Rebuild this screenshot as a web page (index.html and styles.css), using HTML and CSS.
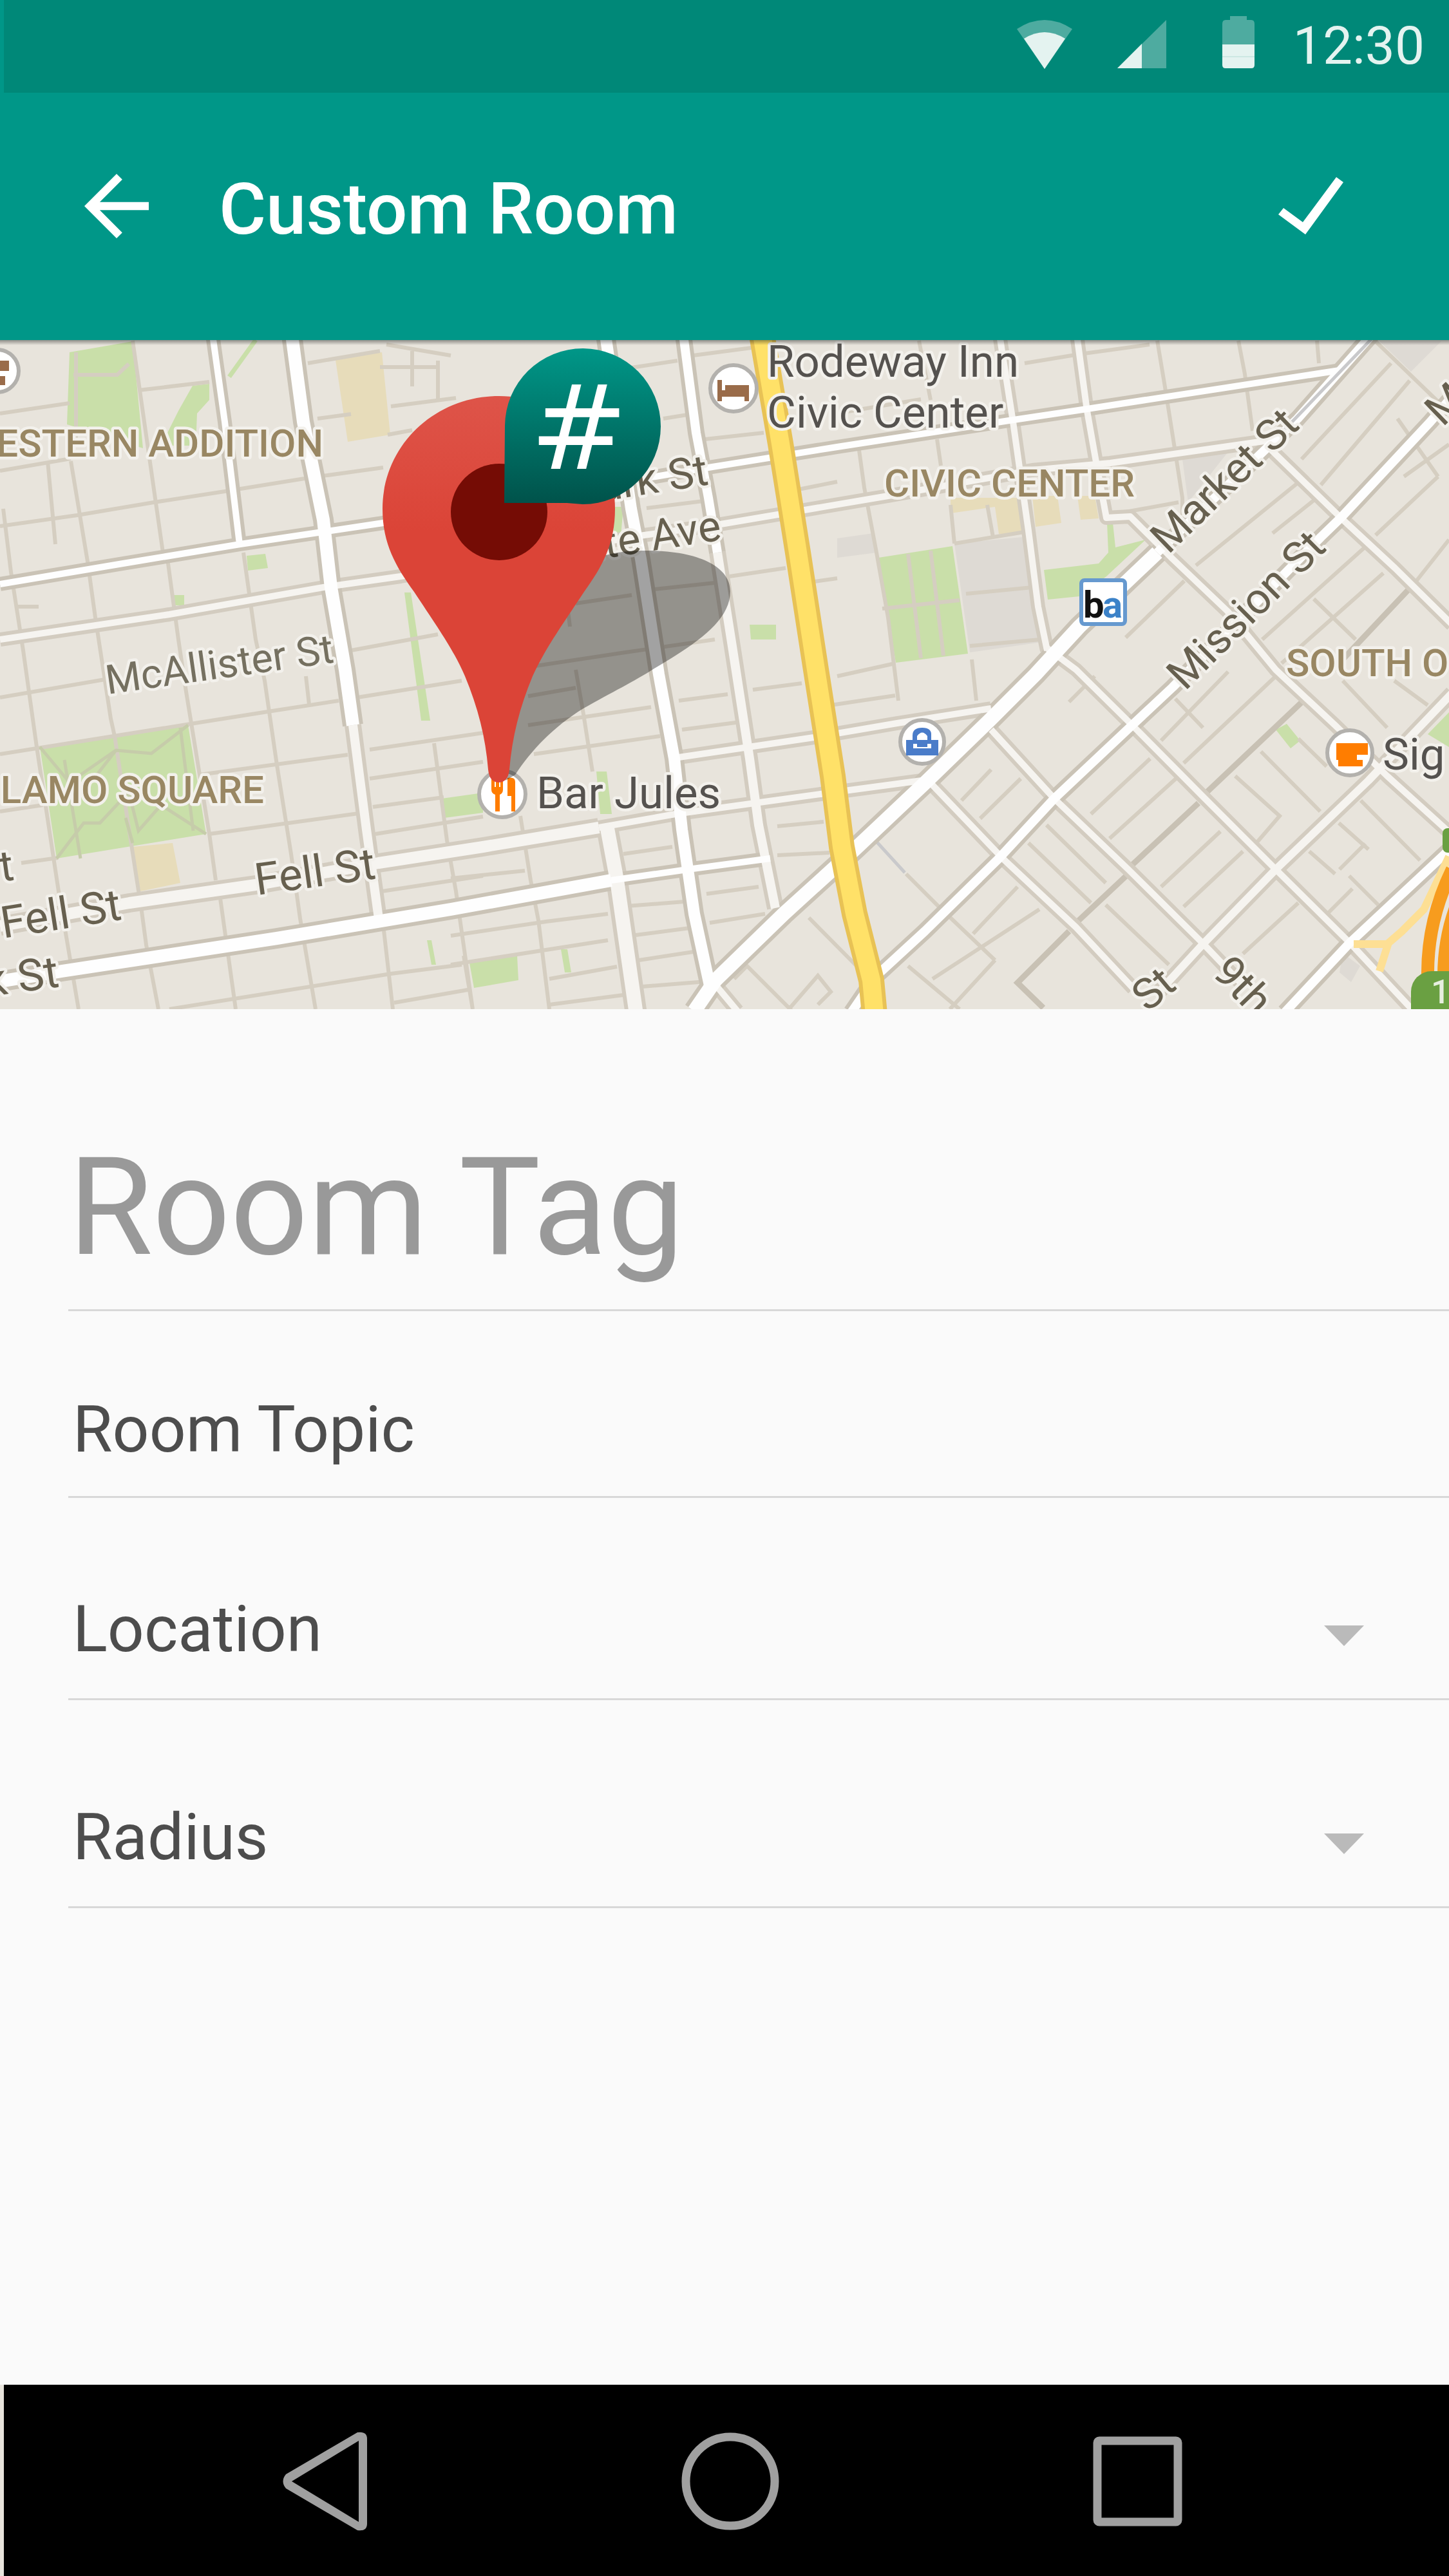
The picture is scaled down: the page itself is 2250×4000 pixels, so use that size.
FILE: index.html
```html
<!DOCTYPE html>
<html lang="en">
<head>
<meta charset="utf-8">
<meta name="viewport" content="width=device-width, initial-scale=1">
<title>Custom Room</title>
<link rel="stylesheet" href="styles.css">
</head>
<body>
<div class="screen">
  <div class="status-bar">
    <svg class="status-icon wifi" viewBox="0 0 86 82" aria-hidden="true">
      <path class="dim" d="M0 20Q43 -8 86 20L43 82Z"/>
      <path class="lit" d="M11 35Q43 15 75 35L43 82Z"/>
    </svg>
    <svg class="status-icon signal" viewBox="0 0 76 82" aria-hidden="true">
      <path class="dim" d="M0 81L76 6V81Z"/>
      <path class="lit" d="M0 81L38 43V81Z"/>
    </svg>
    <svg class="status-icon battery" viewBox="0 0 50 82" aria-hidden="true">
      <path class="dim" d="M12 0H38V6H45Q50 6 50 12V44H0V12Q0 6 5 6H12Z"/>
      <path class="lit" d="M0 44H50V76Q50 81 45 81H5Q0 81 0 76Z"/>
      <path class="tick" d="M0 63H50"/>
    </svg>
    <time class="clock">12:30</time>
  </div>

  <header class="app-bar">
    <button class="icon-button" type="button" aria-label="Back">
      <svg class="back-icon" viewBox="0 0 24 24"><path d="M20 11H7.83l5.59-5.59L12 4l-8 8 8 8 1.41-1.41L7.83 13H20z"/></svg>
    </button>
    <h1 class="title">Custom Room</h1>
    <button class="icon-button" type="submit" form="room-form" aria-label="Save">
      <svg class="check-icon" viewBox="0 0 101 90"><path d="M90 0L101 8L42 89L0 58L8 48L38 70Z"/></svg>
    </button>
  </header>

  <svg class="map" viewBox="0 528 2250 1039" preserveAspectRatio="xMidYMid slice" role="img" aria-label="Map">
    <defs>
      <linearGradient id="badge-fill" x1="0" y1="0" x2="0" y2="1"><stop offset="0" stop-color="#009788"/><stop offset="1" stop-color="#00524a"/></linearGradient>
      <linearGradient id="pin-fill" x1="0" y1="0" x2="0" y2="1"><stop offset="0" stop-color="#de5449"/><stop offset=".35" stop-color="#db4437"/></linearGradient>
      <linearGradient id="bar-shadow" x1="0" y1="0" x2="0" y2="1"><stop offset="0" stop-color="#000" stop-opacity=".38"/><stop offset="1" stop-color="#000" stop-opacity="0"/></linearGradient>
      <g id="roads">
        <path class="w10 minor" d="M1552 520L1573 655L1597 824L1612 942L1626 1010"/>
        <path class="w10 minor" d="M1672 520L1688 638L1703 723L1718 804L1755 802L1821 868L1906 949L1981 1040L2073 1126L2154 1205L2250 1292"/>
        <path class="w10 minor" d="M0 993L263 954L502 912L622 895L1000 831L1119 814L1379 770L1603 730L1724 719L1970 684"/>
        <path class="w18 minor" d="M0 1438L201 1402L397 1374L588 1340L750 1315L930 1285"/>
        <path class="w10 minor" d="M930 1285L1049 1264L1274 1233L1446 1210"/>
        <path class="w10 minor" d="M1054 1176L1264 1145L1393 1123L1539 1100"/>
        <path class="w22 minor" d="M942 1281L958 1367L988 1575"/>
        <path class="w12 minor" d="M1800 1540L1867 1467L1981 1350L2125 1212L2255 1076"/>
        <path class="w10 minor" d="M1448 1219L1557 1333L1671 1440L1760 1535M1539 1133L1637 1240L1752 1350L1867 1464L1930 1530M1624 1005L1671 1040L1758 1126L1867 1236L1981 1350L2096 1464L2195 1570M1965 690L2082 804L2166 882L2255 970M1105 1522L1145 1570"/>
        <path class="w14 minor" d="M1114 858L1138 1010L1164 1178L1178 1281L1204 1410"/>
        <path class="w14 minor" d="M548 1126L569 1288L588 1426"/>
        <path class="w14" d="M1061 520L1081 672L1100 773L1114 858"/>
        <path class="w10" d="M330 520L349 655L372 845"/>
        <path class="w10" d="M0 907L191 875L373 845L595 812L1100 726L1300 694L1567 653L1688 635L2080 575"/>
        <path class="w20" d="M453 520L471 655L502 807L514 912L536 1040L548 1126"/>
        <path class="w20" d="M0 1524L96 1508L430 1457L700 1412L949 1367"/>
        <path class="w10" d="M949 1367L1068 1350L1196 1333"/>
        <path class="w18" d="M940 520L980 790L995 868L1023 1047L1047 1178L1059 1288L1078 1419L1102 1530"/>
        <path class="w22" d="M1078 1570L1111 1522L1217 1419L1327 1319L1436 1216L1539 1116L1608 1047L1676 973L1797 858"/>
        <path class="w14" d="M1797 858L2015 650L2130 520"/>
        <path class="w14" d="M1322 1572L1361 1515L1436 1446L1551 1333L1637 1240L1758 1126L1821 1067L2051 834L2082 804L2221 655L2260 610"/>
        <path class="w14" d="M1995 1572L2096 1464L2250 1320"/>
      </g>
    </defs>

    <rect class="land" y="520" width="2250" height="1050"/>

    <g class="park">
      <path d="M108 547L206 530L222 696L104 659Z"/>
      <path d="M299 599L325 596V621L306 642L304 692H250L277 638Z"/>
      <path d="M383 863L412 860L416 882L385 886ZM270 924H286V940H270Z"/>
      <path d="M62 1160L292 1126L320 1295L88 1333Z"/>
      <path d="M686 1240L750 1231V1262L690 1270ZM729 1495L803 1484L805 1522L736 1534Z"/>
      <path d="M926 1198H942L950 1264H932ZM871 1474H881L887 1510H877ZM955 787H968L964 832H952ZM1164 970H1205V993H1166ZM663 1460H670L677 1498H670Z"/>
      <path d="M1364 866L1479 848L1503 1015L1391 1029Z"/>
      <path d="M1621 885L1706 875L1721 858L1719 812H1728L1732 850L1779 838L1718 895L1676 926L1627 931Z"/>
      <path d="M1981 1133L1998 1124L2019 1150L2004 1162ZM2217 1140L2250 1106V1160Z"/>
      <path d="M628 920H638L668 1119H654Z"/>
    </g>
    <path class="park-line" d="M397 528L356 585"/>
    <g class="school">
      <path d="M521 559L593 547L606 675L540 686Z"/>
      <path d="M206 1315L268 1309L280 1371L218 1384Z"/>
      <path d="M1476 773H1579L1588 829H1551L1545 787L1476 797ZM1603 770H1642L1648 812L1608 818ZM1673 770H1700L1706 805L1678 807Z"/>
    </g>
    <g class="civic">
      <path d="M1482 844L1588 834L1618 997L1506 1013Z"/>
      <path d="M1836 713L1906 703L1845 780ZM2142 530H2238L2191 577ZM1300 836L1356 828L1362 858L1300 866ZM2085 1480L2112 1500L2098 1525L2080 1510Z"/>
    </g>

    <path class="lane" d="M206 529L253 858L261 875L277 993L289 1074L325 1295L335 1367M342 1395L366 1567M110 716L136 872L148 959L172 1116L178 1143L220 1415L227 1467L246 1567M5 790L17 888L36 1010L57 1160L91 1384L122 1567M378 858L397 993L411 1057L430 1188L452 1326L466 1426L490 1567M595 1436L610 1567M674 1154L694 1305L708 1384L734 1567M894 1040L906 1109L920 1198M808 1267L824 1367L836 1429L853 1567M74 716L86 845M118 547L118 690M720 1484L734 1567M475 1050L480 1094"/>
    <path class="lane" d="M0 642L108 626M215 606L325 593M0 731L110 712M0 817L120 800L239 780L349 763L473 743L595 726M478 564L590 545M493 650L545 643M607 631L708 618M602 675L640 668M0 1083L163 1055M0 1171L296 1124L416 1105L526 1088M555 1083L717 1057M310 1203L540 1172M574 1164L750 1138M325 1295L564 1262M574 1209L750 1183M579 1253L689 1238M583 1295L750 1268M0 1260L67 1250M33 1340L90 1332M593 1384L750 1360M263 1567L607 1512L717 1498M612 1557L732 1536M545 1010L680 985M114 582H182L200 565M24 942H60"/>
    <path class="lane" d="M700 1364L815 1352M700 1453L848 1431L944 1419M700 1498L944 1460M853 1520L958 1501M853 1560L968 1545M968 1326L1044 1315M973 1407L1063 1400M987 1452L1071 1441M992 1491L1083 1477M997 1532L1097 1524M1054 1088L1130 1078M1059 1133L1150 1121M1169 1071L1245 1061M1207 1283L1279 1276M1207 1328L1288 1324M1097 1388L1178 1377M1102 1433L1188 1419M820 1081L894 1068M820 1126L1011 1098M829 1171L1025 1143M894 937L981 924M1016 915L1110 905M832 1034L971 1013L1110 993M882 949L885 973M980 571L1052 560M1030 650L1080 642M1076 552L1167 540M1095 682L1186 672M1133 895L1220 882M1004 789L1100 777M1240 760L1300 748M1250 905L1300 898M1300 1050L1390 1030M1290 1095L1390 1080M600 535L700 552M640 545V600M680 560V620M590 570H680"/>
    <path class="lane" d="M1797 529L1809 601L1824 696L1836 773V800M1923 529L1933 581L1945 669M2045 529L2048 564M1333 692L1342 757L1361 858L1379 959L1395 1088M1509 1024L1516 1088M1455 682L1461 723M1476 784L1482 844M1533 784L1542 834M1427 529L1445 621M1591 564L1676 550L1785 535M1482 844L1603 824M1506 1003L1615 993M1500 922L1603 912M1720 800L1830 780M1410 860L1430 1022M1445 855L1465 1018M1370 945L1490 932M1310 640L1430 620"/>
    <path class="lane" d="M2160 564L2021 713M2189 591L2051 753M2136 530L2250 640M2015 750L1857 878M2045 773L1976 828M1839 902L1748 990M2233 740L2136 831M2250 838L2197 905M2118 851L1960 993M2148 890L1990 1030M2250 690L2180 740M2170 650L2233 740M2040 930L2105 993M1907 1043L1803 1150M1981 1050L1838 1185M1786 1178L1694 1264M1826 1209L1723 1302M1895 1291L1803 1377M1930 1322L1838 1408M1580 1377L1511 1450M1614 1412L1448 1520M2016 1402L1930 1481M1539 1195L1493 1243M1585 1209L1522 1271M1660 1090L1700 1050M2100 1380L2060 1420M2120 1310L2080 1350M1475 1567L1545 1491"/>
    <path class="lane" d="M1597 1309L1694 1402M1717 1405L1815 1498M1625 1281L1717 1371M1918 1205L1987 1267L1950 1310M1958 1167L2050 1260M2016 1147L2060 1190M2033 1322L2073 1357M2079 1278L2125 1319M2113 1243L2205 1336M2085 1057L2154 1130M2165 1057L2217 1095M1407 1357L1460 1410L1545 1491M1256 1425L1350 1520M1140 1520L1160 1500L1230 1570M1225 1567L1270 1515L1290 1540L1270 1560M1410 1500L1490 1567M1825 1085L1868 1130M2095 1360L2140 1405"/>
    <path class="lane dark" d="M2027 1085L1875 1229M1861 1247L1758 1343M1752 1357L1671 1433M1660 1446L1580 1526L1620 1565M2197 905L2070 1040"/>
    <path class="park-path" d="M62 1160L108 1215L180 1165L235 1170L292 1126M100 1180L125 1333M88 1333L130 1278H155L200 1230L215 1290L250 1250L320 1295M280 1130L300 1290M180 1165L145 1210M206 1309L195 1270"/>
    <path class="rail" d="M1362 1308L1405 1355M1115 1535L1190 1460"/>

    <use href="#roads" class="road-edge"/>
    <use href="#roads" class="road-fill"/>
    <path class="rail" d="M2130 526L1990 672"/>

    <path class="avenue-edge" d="M1183 520L1212 689L1239 858L1267 1040L1293 1205L1307 1315L1327 1419L1353 1522L1358 1575"/>
    <path class="avenue-fill" d="M1183 520L1212 689L1239 858L1267 1040L1293 1205L1307 1315L1327 1419L1353 1522L1358 1575"/>

    <path class="ramp" d="M2250 1330L2211 1412L2177 1446L2154 1466H2102M2156 1464L2142 1508"/>
    <path class="freeway" d="M2255 1350Q2216 1430 2217 1515M2260 1410Q2242 1460 2242 1515"/>
    <rect class="shield" x="2191" y="1508" width="90" height="90" rx="32"/>
    <rect class="shield" x="2240" y="1286" width="30" height="38" rx="8"/>

    <g class="poi">
      <circle cx="-4" cy="576" r="33"/>
      <circle cx="1139" cy="603" r="36"/>
      <circle cx="780" cy="1233" r="36"/>
      <circle cx="1432" cy="1152" r="34"/>
      <circle cx="2096" cy="1169" r="35"/>
    </g>
    <path class="hotel" d="M1114 590H1121V606H1126V598H1163V623H1156V616H1121V623H1114ZM0 560H14V576H0ZM0 584H8V598H0Z"/>
    <path class="food" d="M763 1208H768V1222H770V1208H775V1222H777V1208H781V1226Q781 1232 776 1234V1260H769V1234Q763 1232 763 1226ZM788 1208Q800 1206 800 1214V1260H794V1236H788ZM2075 1154H2124V1172H2107V1180H2116V1190H2078V1180H2075Z"/>
    <path class="shop" d="M1407 1173V1149H1417V1142Q1417 1130 1432 1130T1446 1142V1149H1457V1173ZM1424 1149H1440V1143Q1432 1132 1424 1143ZM1418 1155V1162H1446V1155H1440V1160H1424V1155Z"/>
    <rect class="transit" x="1679" y="901" width="68" height="68" rx="5"/>

    <g class="label area">
      <text x="502" y="709" text-anchor="end">ESTERN ADDITION</text>
      <text x="410" y="1247" text-anchor="end">LAMO SQUARE</text>
      <text x="1373" y="771">CIVIC CENTER</text>
      <text x="1997" y="1050">SOUTH O</text>
    </g>
    <g class="label street">
      <text class="small" transform="translate(167 1078) rotate(-8)">McAllister St</text>
      <text class="large" transform="translate(399 1390) rotate(-8)">Fell St</text>
      <text class="large" transform="translate(5 1457) rotate(-9)">Fell St</text>
      <text class="large" transform="translate(-21 1548) rotate(-8)">k St</text>
      <text transform="translate(2 1369) rotate(-8)">t</text>
      <text transform="translate(1102 752) rotate(-9)" text-anchor="end">Turk St</text>
      <text transform="translate(1122 838) rotate(-9)" text-anchor="end">Golden Gate Ave</text>
      <text transform="translate(1814 862) rotate(-44)">Market St</text>
      <text transform="translate(1840 1074) rotate(-45)">Mission St</text>
      <text transform="translate(2240 664) rotate(-44)">M</text>
      <text transform="translate(1782 1573) rotate(-40)">St</text>
      <text transform="translate(1880 1512) rotate(46)">9th</text>
    </g>
    <g class="label place">
      <text x="1191" y="585">Rodeway Inn</text>
      <text x="1191" y="664">Civic Center</text>
      <text x="833" y="1255">Bar Jules</text>
      <text x="2147" y="1195">Sig</text>
    </g>
    <text class="bart-b" x="1682" y="959">b</text>
    <text class="bart-a" x="1712" y="959">a</text>
    <text class="route" x="2222" y="1558">1</text>

    <path class="pin-shadow" d="M785 1212L800 1203C825 1165 860 1128 906 1100C950 1075 985 1058 1016 1038C1080 1000 1134 965 1134 918C1134 880 1085 855 1004 855C970 855 955 858 930 865L790 1000Z"/>
    <path class="pin" fill="url(#pin-fill)" d="M775 615C675 615 594 692 594 790C594 845 615 880 643 919C680 975 705 1010 722 1050C742 1098 754 1145 758 1195Q760 1215 774 1215Q789 1215 791 1195C795 1145 807 1098 827 1050C845 1010 870 975 907 919C935 880 955 845 955 790C955 692 875 615 775 615Z"/>
    <circle class="pin-hole" cx="775" cy="795" r="75"/>
    <path fill="url(#badge-fill)" d="M784 661A121 121 0 1 1 905 783L880 781H783Z"/>
    <text class="hash" x="899" y="728" text-anchor="middle">#</text>
    <rect y="528" width="2250" height="8" fill="url(#bar-shadow)"/>
  </svg>

  <form class="room-form" id="room-form">
    <div class="field field-tag"><input class="control" type="text" placeholder="Room Tag" aria-label="Room Tag"></div>
    <div class="field field-topic"><input class="control" type="text" placeholder="Room Topic" aria-label="Room Topic"></div>
    <div class="field field-location">
      <select class="control" aria-label="Location"><option>Location</option></select>
      <svg class="caret" viewBox="0 0 62 32" aria-hidden="true"><path d="M0 0H62L31 32Z"/></svg>
    </div>
    <div class="field field-radius">
      <select class="control" aria-label="Radius"><option>Radius</option></select>
      <svg class="caret" viewBox="0 0 62 32" aria-hidden="true"><path d="M0 0H62L31 32Z"/></svg>
    </div>
  </form>

  <nav class="nav-bar" aria-label="System">
    <button class="nav-button" type="button" aria-label="Back">
      <svg viewBox="0 0 180 180"><path fill-rule="evenodd" d="M30 79L141 14Q156 12 156 24V156Q156 168 141 166L30 101Q21 90 30 79ZM39 90L143 153V27Z"/></svg>
    </button>
    <button class="nav-button" type="button" aria-label="Home">
      <svg viewBox="0 0 180 180"><circle class="outline" cx="90" cy="90" r="69"/></svg>
    </button>
    <button class="nav-button" type="button" aria-label="Recent apps">
      <svg viewBox="0 0 180 180"><rect class="outline" x="30" y="27" width="125" height="126" rx="3"/></svg>
    </button>
  </nav>
</div>
</body>
</html>
```
FILE: styles.css
```css
* { box-sizing: border-box; }

body {
  margin: 0;
  background: #fafafa;
  font-family: Roboto, "Liberation Sans", sans-serif;
}

button {
  padding: 0;
  border: 0;
  background: none;
  cursor: pointer;
}

.screen {
  display: flex;
  flex-direction: column;
  min-height: 100vh;
}

/* Status bar */
.status-bar {
  display: flex;
  justify-content: flex-end;
  align-items: center;
  height: 144px;
  padding-right: 38px;
  border-left: 6px solid #009788;
  background: #008878;
}
.status-icon { height: 82px; margin-bottom: 12px; }
.wifi { width: 86px; margin-right: 70px; }
.signal { width: 76px; margin-right: 87px; }
.battery { width: 50px; margin-right: 60px; }
.dim { fill: #4eaba0; }
.lit { fill: #e4f3f0; }
.tick { stroke: #b4dcd6; stroke-width: 1; }
.clock {
  margin-bottom: 2px;
  color: #e4f3f0;
  font-size: 82px;
  line-height: 96px;
}

/* App bar */
.app-bar {
  display: flex;
  align-items: center;
  height: 384px;
  padding: 0 164px 32px 106px;
  background: #009788;
}
.icon-button { display: flex; }
.icon-button svg { fill: #fff; }
.back-icon { width: 150px; height: 150px; }
.check-icon { width: 101px; height: 90px; }
.title {
  flex: 1;
  margin: 10px 0 0 84px;
  color: #fff;
  font-size: 112px;
  font-weight: 500;
  line-height: 132px;
}

/* Map */
.map {
  display: block;
  width: 100%;
  aspect-ratio: 2250 / 1039;
}
.land { fill: #e8e4dc; }
.park { fill: #c9dfa9; }
.park-line { fill: none; stroke: #c9dfa9; stroke-width: 7; }
.school { fill: #e7dcba; }
.civic { fill: #dedad4; }
.lane { fill: none; stroke: #d5cec1; stroke-width: 6; }
.lane.dark { stroke: #c8c1b4; stroke-width: 9; }
.park-path { fill: none; stroke: #c6ccaa; stroke-width: 5; }
.rail { fill: none; stroke: #c9c9cb; stroke-width: 5; }
#roads path { fill: none; stroke-linejoin: round; }
#roads .w10 { stroke-width: calc(10px + var(--edge)); }
#roads .w12 { stroke-width: calc(12px + var(--edge)); }
#roads .w14 { stroke-width: calc(14px + var(--edge)); }
#roads .w18 { stroke-width: calc(18px + var(--edge)); }
#roads .w20 { stroke-width: calc(20px + var(--edge)); }
#roads .w22 { stroke-width: calc(22px + var(--edge)); }
#roads .minor { stroke: var(--minor); }
.road-edge { --edge: 12px; --minor: #d3ccc0; stroke: #cac3b6; }
.road-fill { --edge: 0px; --minor: #f6f4f0; stroke: #fefefe; }
.avenue-edge { fill: none; stroke: #e8c255; stroke-width: 40; }
.avenue-fill { fill: none; stroke: #ffe168; stroke-width: 28; }
.ramp { fill: none; stroke: #fddf94; stroke-width: 12; }
.freeway { fill: none; stroke: #f79c1e; stroke-width: 20; }
.shield { fill: #6aa042; }
.poi circle { fill: #fff; stroke: #b3b1ad; stroke-width: 6; }
.hotel { fill: #9a6c4a; }
.food { fill: #ff7d00; }
.shop { fill: #4a7cc9; fill-rule: evenodd; }
.transit { fill: #fff; stroke: #6699cf; stroke-width: 6; }
.label text {
  paint-order: stroke;
  stroke: #f3f1ec;
  stroke-width: 9;
  stroke-linejoin: round;
}
.area { fill: #998763; font-size: 60px; font-weight: 500; }
.street { fill: #67604f; font-size: 67px; }
.street .small { fill: #757060; font-size: 63px; }
.street .large { font-size: 69px; }
.place { fill: #55524f; font-size: 69px; }
.bart-b, .bart-a { font-size: 58px; font-weight: 700; }
.bart-b { fill: #111; }
.bart-a { fill: #3c82c8; }
.route { fill: #e6efdf; font-size: 52px; font-weight: 500; }
.pin-shadow { fill: #000; fill-opacity: .36; }
.pin-hole { fill: #750c05; }
.hash {
  fill: #fff;
  font-family: "DejaVu Sans", sans-serif;
  font-size: 182px;
}

/* Form */
.room-form {
  display: flex;
  flex-direction: column;
  padding-left: 106px;
}
.field {
  display: flex;
  align-items: flex-end;
  border-bottom: 3px solid #d8d8d8;
}
.control {
  flex: 1;
  min-width: 0;
  margin: 0;
  padding: 0 0 0 7px;
  border: 0;
  outline: 0;
  background: none;
  color: #4d4d4d;
  font-family: inherit;
  font-size: 100px;
  line-height: 120px;
  height: 120px;
  appearance: none;
}
.control::placeholder { color: #4d4d4d; opacity: 1; }
.field-tag { padding: 180px 0 30px; }
.field-tag .control {
  height: 256px;
  padding-left: 0;
  font-size: 212px;
  line-height: 256px;
}
.field-tag .control::placeholder { color: #999; }
.field-topic { padding: 124px 0 43px; }
.field-location { padding: 144px 132px 47px 0; }
.field-radius { padding: 153px 132px 47px 0; }
.caret {
  width: 62px;
  height: 32px;
  margin-bottom: 34px;
  fill: #bababa;
  pointer-events: none;
}

/* System navigation */
.nav-bar {
  display: flex;
  justify-content: center;
  gap: 450px;
  margin-top: auto;
  padding: 60px 0 57px 12px;
  border-left: 6px solid #e8e4dc;
  background: #000;
}
.nav-button { display: flex; flex: 0 1 180px; }
.nav-button svg { width: 100%; fill: #a0a0a0; }
.nav-button .outline { fill: none; stroke: #a0a0a0; stroke-width: 13; }
```
